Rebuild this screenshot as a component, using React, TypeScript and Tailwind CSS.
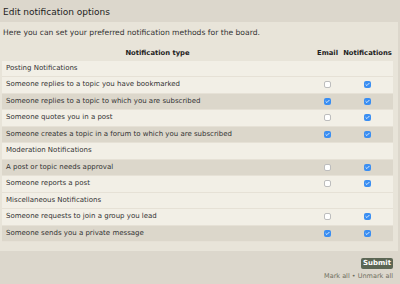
import { Check } from "lucide-react";

type Row =
  | { kind: "section"; label: string }
  | { kind: "item"; label: string; email: boolean; notify: boolean; dark: boolean };

const rows: Row[] = [
  { kind: "section", label: "Posting Notifications" },
  { kind: "item", label: "Someone replies to a topic you have bookmarked", email: false, notify: true, dark: false },
  { kind: "item", label: "Someone replies to a topic to which you are subscribed", email: true, notify: true, dark: true },
  { kind: "item", label: "Someone quotes you in a post", email: false, notify: true, dark: false },
  { kind: "item", label: "Someone creates a topic in a forum to which you are subscribed", email: true, notify: true, dark: true },
  { kind: "section", label: "Moderation Notifications" },
  { kind: "item", label: "A post or topic needs approval", email: false, notify: true, dark: true },
  { kind: "item", label: "Someone reports a post", email: false, notify: true, dark: false },
  { kind: "section", label: "Miscellaneous Notifications" },
  { kind: "item", label: "Someone requests to join a group you lead", email: false, notify: true, dark: false },
  { kind: "item", label: "Someone sends you a private message", email: true, notify: true, dark: true },
];

function Box({ checked }: { checked: boolean }) {
  if (checked) {
    return (
      <span className="flex h-[7px] w-[7px] items-center justify-center rounded-[2px] bg-[#3a8ef2]">
        <Check className="h-[5px] w-[5px] text-white" strokeWidth={4} />
      </span>
    );
  }
  return <span className="block h-[7px] w-[7px] rounded-[2px] border border-[#bdbdbd] bg-white" />;
}

export default function App() {
  return (
    <div className="h-[284px] w-[400px] bg-[#dcd7cc] font-['DejaVu_Sans',sans-serif] text-[#333]">
      <div className="h-[22px] px-[3px] pt-[5px] text-[9px] leading-[14px] text-[#222]">
        Edit notification options
      </div>
      <div className="mr-[2px] bg-[#e8e4d9] pb-[9px] pl-[2px] pr-[5px] pt-[4px]">
        <p className="pl-[1px] text-[7.6px] leading-[14px]">
          Here you can set your preferred notification methods for the board.
        </p>
        <div className="mt-[7px] grid grid-cols-[1fr_29px_51px] items-center text-[7px]">
          <div className="text-center text-[6.8px] font-bold leading-[13.5px] text-[#222]">
            Notification type
          </div>
          <div className="text-center text-[6.8px] font-bold leading-[13.5px] text-[#222]">Email</div>
          <div className="text-center text-[6.8px] font-bold leading-[13.5px] text-[#222]">
            Notifications
          </div>
          {rows.map((r) =>
            r.kind === "section" ? (
              <div
                key={r.label}
                className="col-span-3 border-b border-[#e6e1d6] bg-[#f2efe6] pl-[4px] leading-[15.5px]"
              >
                {r.label}
              </div>
            ) : (
              <div
                key={r.label}
                className={`col-span-3 grid grid-cols-subgrid items-center border-b border-[#e6e1d6] leading-[15.5px] ${
                  r.dark ? "bg-[#dcd7cb]" : "bg-[#f2efe6]"
                }`}
              >
                <div className="pl-[4px]">{r.label}</div>
                <div className="flex justify-center">
                  <Box checked={r.email} />
                </div>
                <div className="flex justify-center">
                  <Box checked={r.notify} />
                </div>
              </div>
            )
          )}
        </div>
      </div>
      <div className="flex flex-col items-end pr-[7px] pt-[7px]">
        <button className="rounded-[2px] bg-[#5b6654] px-[2px] text-[7px] font-bold leading-[11px] text-white">
          Submit
        </button>
        <div className="mt-[2px] text-[6.5px] leading-[10px] text-[#6e6e5e]">
          Mark all • Unmark all
        </div>
      </div>
    </div>
  );
}
